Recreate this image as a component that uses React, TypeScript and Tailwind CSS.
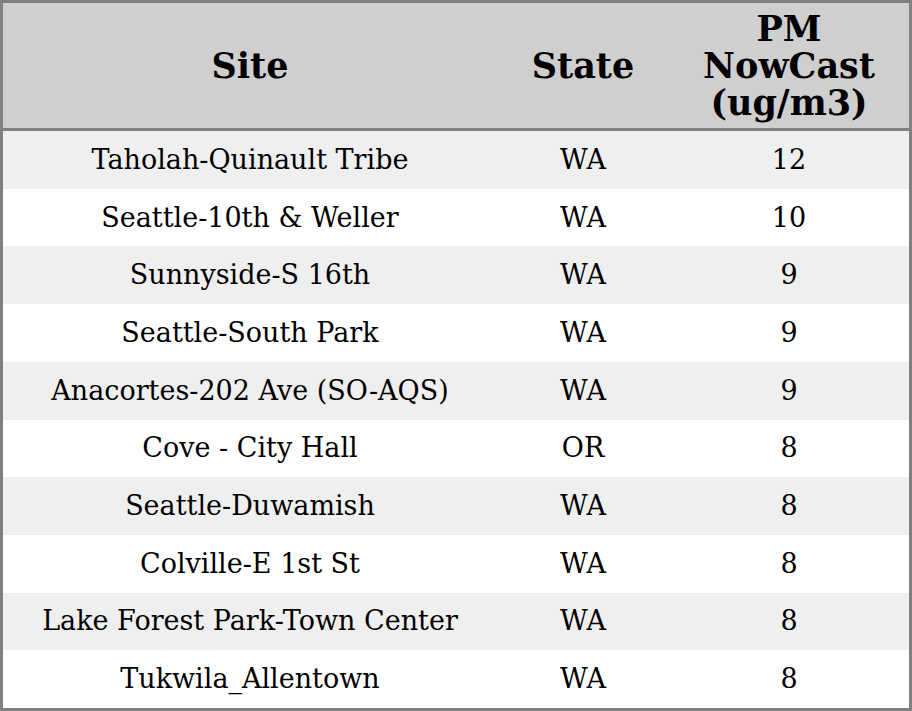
const ROWS = [
  ["Taholah-Quinault Tribe", "WA", "12"],
  ["Seattle-10th & Weller", "WA", "10"],
  ["Sunnyside-S 16th", "WA", "9"],
  ["Seattle-South Park", "WA", "9"],
  ["Anacortes-202 Ave (SO-AQS)", "WA", "9"],
  ["Cove - City Hall", "OR", "8"],
  ["Seattle-Duwamish", "WA", "8"],
  ["Colville-E 1st St", "WA", "8"],
  ["Lake Forest Park-Town Center", "WA", "8"],
  ["Tukwila_Allentown", "WA", "8"],
];

const COLS = "grid grid-cols-[494px_172px_1fr]";

export default function App() {
  return (
    <div className="flex h-[711px] w-[912px] flex-col border-[3px] border-[#808080] bg-white font-['DejaVu_Serif',serif] text-black">
      <div className={`${COLS} h-[128px] shrink-0 items-center border-b-[3px] border-[#808080] bg-[#cfcfcf] text-center text-[35px] font-bold leading-[37px]`}>
        <div>Site</div>
        <div>State</div>
        <div>
          PM
          <br />
          NowCast
          <br />
          (ug/m3)
        </div>
      </div>
      <div className="flex flex-1 flex-col">
        {ROWS.map((row, i) => (
          <div
            key={row[0]}
            className={`${COLS} flex-1 items-center text-center text-[27px] leading-[32px] ${i % 2 === 0 ? "bg-[#efefef]" : "bg-white"}`}
          >
            {row.map((cell, j) => (
              <div key={j}>{cell}</div>
            ))}
          </div>
        ))}
      </div>
    </div>
  );
}
